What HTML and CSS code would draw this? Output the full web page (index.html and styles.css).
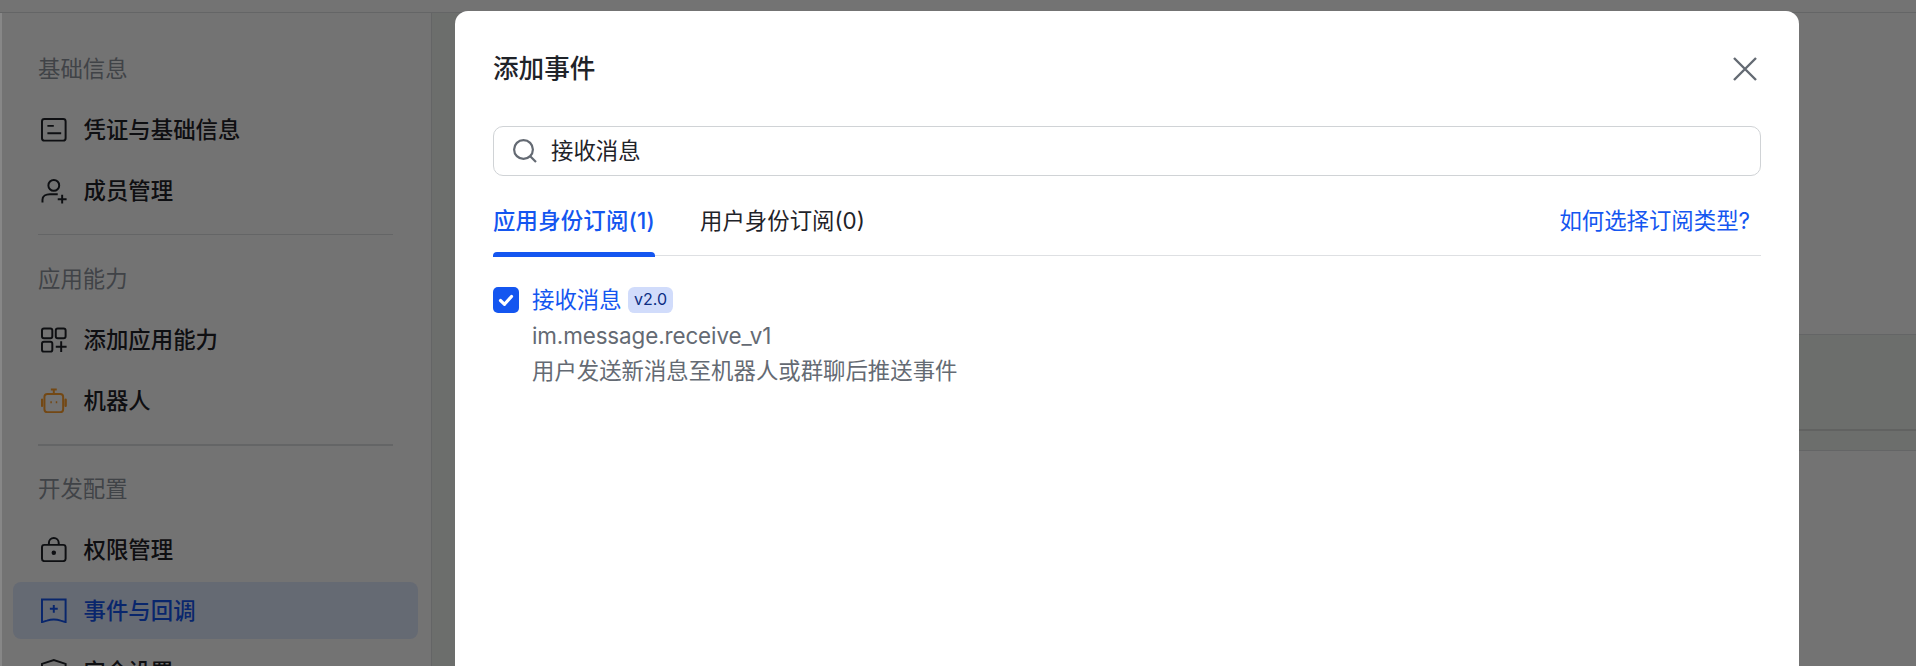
FILE: index.html
```html
<!DOCTYPE html>
<html lang="zh-CN">
  <head>
    <meta charset="UTF-8" />
    <meta name="viewport" content="width=device-width, initial-scale=1.0" />
    <title>添加事件</title>
    <link rel="stylesheet" href="styles.css">
  </head>
  <body>
    <div class="topbar"></div>
    <div class="layout">
      <nav class="sidebar">
        <div class="nav-title">基础信息</div>
        <a class="nav-item">
          <svg class="nav-icon" viewBox="0 0 26 26" fill="none" stroke="currentColor" stroke-width="2"><rect x="1" y="2" width="24" height="22" rx="2.500"/><path d="M6.500 9h6.500M6.500 16.500h14"/></svg>
          凭证与基础信息
        </a>
        <a class="nav-item">
          <svg class="nav-icon" viewBox="0 0 26 26" fill="none" stroke="currentColor" stroke-width="2"><circle cx="13" cy="7.500" r="5.500"/><path d="M1.500 25v-3C1.500 18.500 5 16.500 9 16.500h8M17 21.500h9M21.500 17v9"/></svg>
          成员管理
        </a>
        <div class="nav-divider"></div>
        <div class="nav-title">应用能力</div>
        <a class="nav-item">
          <svg class="nav-icon" viewBox="0 0 26 26" fill="none" stroke="currentColor" stroke-width="2"><rect x="1" y="1.500" width="10.500" height="10" rx="2"/><rect x="15" y="1.500" width="10" height="10" rx="2"/><rect x="1" y="15" width="10.500" height="10" rx="2"/><path d="M15 20h11M20.500 14.500v11"/></svg>
          添加应用能力
        </a>
        <a class="nav-item">
          <svg class="nav-icon robot" viewBox="0 0 26 26" fill="none" stroke="currentColor" stroke-width="2"><rect x="3.500" y="6" width="19" height="18.500" rx="3"/><path d="M13 2v4M10 1.500h6"/><path d="M1 12v6M25 12v6" stroke-width="2.500" stroke-linecap="round"/><path d="M9.500 14.500h1.500M15 14.500h1.500"/></svg>
          机器人
        </a>
        <div class="nav-divider thick"></div>
        <div class="nav-title">开发配置</div>
        <a class="nav-item">
          <svg class="nav-icon" viewBox="0 0 26 26" fill="none" stroke="currentColor" stroke-width="2"><rect x="1" y="8" width="24" height="16.500" rx="2.500"/><path d="M8 8V6a5 5 0 0 1 10 0v2"/><circle cx="13" cy="16" r="1.300" fill="currentColor"/></svg>
          权限管理
        </a>
        <a class="nav-item active">
          <svg class="nav-icon" viewBox="0 0 26 26" fill="none" stroke="currentColor" stroke-width="2"><path d="M1 1.500h24v23L20 23c-4.500-1.500-9.500-1.500-14 0l-5 1.500z"/><path d="M9 11h8M13 7v8"/></svg>
          事件与回调
        </a>
        <a class="nav-item">
          <svg class="nav-icon" viewBox="0 0 26 26" fill="none" stroke="currentColor" stroke-width="2"><path d="M1 6L13 2l12 4v11c0 4-6 7-12 8-6-1-12-4-12-8z"/></svg>
          安全设置
        </a>
      </nav>
      <main class="content">
        <div class="card top-card"></div>
        <div class="gap-line"></div>
        <div class="card"></div>
      </main>
    </div>

    <!-- Modal -->
    <div class="overlay"></div>
    <div class="window-edge"></div>
    <div class="modal">
      <div class="modal-header">
        <h2>添加事件</h2>
        <svg class="close-icon" viewBox="0 0 26 26" fill="none" stroke="currentColor" stroke-width="2.400"><path d="M2 2l22 22M24 2L2 24"/></svg>
      </div>
      <div class="search-box">
        <svg class="search-icon" viewBox="0 0 24 24" fill="none" stroke="currentColor" stroke-width="2.200"><circle cx="10.500" cy="10.500" r="9.400"/><path d="M17.500 17.500l5.500 5.500"/></svg>
        <span>接收消息</span>
      </div>
      <div class="tabs">
        <div class="tab active">应用身份订阅(1)</div>
        <div class="tab">用户身份订阅(0)</div>
        <a class="tab-link">如何选择订阅类型?</a>
      </div>
      <div class="event-row">
        <span class="checkbox">
          <svg viewBox="0 0 26 26" fill="none" stroke="#fff" stroke-width="3.200" stroke-linecap="round" stroke-linejoin="round"><path d="M7.500 13.500l4 3.800 7-7.800"/></svg>
        </span>
        <div class="event-info">
          <div class="event-name">接收消息 <span class="badge">v2.0</span></div>
          <div class="event-text event-key">im.message.receive_v1</div>
          <div class="event-text">用户发送新消息至机器人或群聊后推送事件</div>
        </div>
      </div>
    </div>
  </body>
</html>
```

FILE: styles.css
```css
* {
  box-sizing: border-box;
}

html,
body {
  height: 100%;
}

body {
  margin: 0;
  overflow: hidden;
  background-color: #fff;
  color: #1f2329;
  font-family: Inter, "Noto Sans CJK SC", sans-serif;
  font-size: 22.4px;
  line-height: 35.2px;
}

.topbar {
  height: 13px;
  border-bottom: 1px solid #dee0e3;
}

.layout {
  display: flex;
  height: 653px;
  padding-left: 2px;
}

.sidebar {
  width: 430px;
  height: 100%;
  flex-shrink: 0;
  padding: 38px 13px 0 11px;
  background-color: #fff;
  border-right: 1px solid #dee0e3;
  overflow: hidden;
}

.nav-title {
  height: 35.2px;
  padding-left: 25px;
  margin-bottom: 15px;
  color: #8f959e;
}

.nav-item {
  display: flex;
  align-items: center;
  gap: 17px;
  height: 57.6px;
  margin-bottom: 3.200px;
  padding-left: 28px;
  border-radius: 8px;
  color: #1f2329;
  font-weight: 500;
}

.nav-item.active {
  background-color: #e1eaff;
  color: #1456f0;
}

.nav-icon {
  width: 25.600px;
  height: 25.600px;
  flex-shrink: 0;
}

.nav-icon.robot {
  color: #ff9f2e;
}

.nav-divider {
  height: 1px;
  margin: 14px 25px 26.500px;
  background-color: #dee0e3;
}

.nav-divider.thick {
  height: 2px;
  margin-bottom: 25px;
}

.content {
  flex: 1;
  display: flex;
  flex-direction: column;
  padding-left: 40px;
  background-color: #f0f3f0;
}

.card {
  flex: 1;
  background-color: #fff;
  border-top: 1px solid #dee0e3;
}

.top-card {
  flex: none;
  height: 321px;
  border-top: none;
}

.gap-line {
  height: 97px;
  border-top: 1px solid #dee0e3;
  border-bottom: 2px solid #d8dad8;
  margin-bottom: 19px;
}

.overlay {
  position: fixed;
  top: 0;
  left: 0;
  width: 100%;
  height: 100%;
  background-color: rgba(0, 0, 0, 0.55);
}

.window-edge {
  position: fixed;
  top: 13px;
  left: 0;
  bottom: 0;
  width: 2px;
  background-color: #878787;
}

.modal {
  position: fixed;
  top: 11px;
  left: 455px;
  width: 1344px;
  height: 700px;
  padding: 38px 38px 0;
  background-color: #fff;
  border-radius: 13px;
}

.modal-header {
  display: flex;
  justify-content: space-between;
  align-items: center;
  padding-right: 3px;
}

.modal-header h2 {
  margin: 0;
  font-size: 25.600px;
  font-weight: 500;
  line-height: 40px;
}

.close-icon {
  width: 26px;
  height: 26px;
  color: #646a73;
}

.search-box {
  display: flex;
  align-items: center;
  gap: 14px;
  height: 50px;
  margin-top: 37px;
  padding-left: 19px;
  border: 1px solid #d0d3d6;
  border-radius: 10px;
}

.search-icon {
  width: 24px;
  height: 24px;
  color: #646a73;
}

.tabs {
  display: flex;
  align-items: flex-start;
  gap: 45px;
  height: 80px;
  padding-top: 27px;
  border-bottom: 1px solid #dee0e3;
}

.tab {
  position: relative;
  height: 53px;
}

.tab.active {
  color: #1456f0;
  font-weight: 500;
  letter-spacing: 0.2px;
}

.tab.active::after {
  content: "";
  position: absolute;
  left: 0;
  right: 0;
  bottom: -1px;
  height: 5px;
  background-color: #1456f0;
  border-radius: 4px 4px 0 0;
}

.tab-link {
  margin-left: auto;
  padding-right: 11px;
  color: #1456f0;
}

.event-row {
  display: flex;
  gap: 13px;
  margin-top: 26px;
}

.checkbox {
  width: 26px;
  height: 26px;
  flex-shrink: 0;
  margin-top: 5px;
  background-color: #1456f0;
  border-radius: 5px;
}

.checkbox svg {
  display: block;
}

.event-name {
  display: flex;
  align-items: center;
  gap: 6px;
  height: 36px;
  color: #1456f0;
}

.badge {
  height: 25.600px;
  padding: 0 6.400px;
  background-color: #d1dcfb;
  border-radius: 6.400px;
  color: #0c2e84;
  font-size: 16px;
  line-height: 25.600px;
}

.event-text {
  color: #646a73;
  line-height: 35px;
}

.event-key {
  letter-spacing: -0.1px;
}
```
